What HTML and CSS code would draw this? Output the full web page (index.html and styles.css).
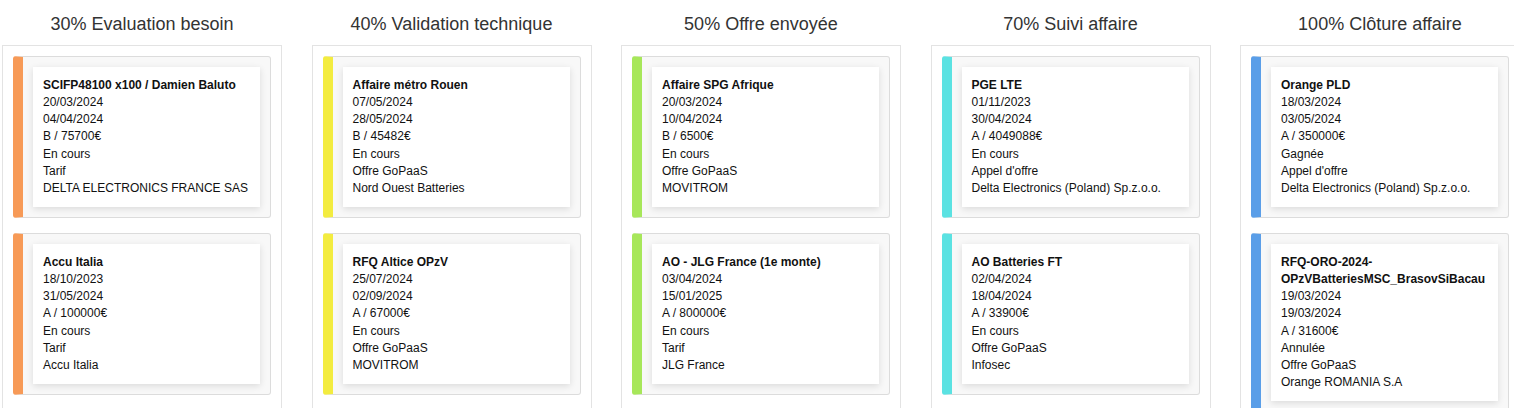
FILE: index.html
```html
<!DOCTYPE html>
<html lang="fr">
<head>
<meta charset="utf-8">
<title>Pipeline</title>
<link rel="stylesheet" href="styles.css">
</head>
<body>
<div class="board">
  <section class="stage">
    <h4 class="stage-title">30% Evaluation besoin</h4>
    <div class="stage-body">
      <div class="deal deal-orange"><div class="deal-inner">
        <div class="deal-name">SCIFP48100 x100 / Damien Baluto</div>
        <div>20/03/2024</div><div>04/04/2024</div><div>B / 75700€</div><div>En cours</div><div>Tarif</div><div>DELTA ELECTRONICS FRANCE SAS</div>
      </div></div>
      <div class="deal deal-orange"><div class="deal-inner">
        <div class="deal-name">Accu Italia</div>
        <div>18/10/2023</div><div>31/05/2024</div><div>A / 100000€</div><div>En cours</div><div>Tarif</div><div>Accu Italia</div>
      </div></div>
    </div>
  </section>
  <section class="stage">
    <h4 class="stage-title">40% Validation technique</h4>
    <div class="stage-body">
      <div class="deal deal-yellow"><div class="deal-inner">
        <div class="deal-name">Affaire métro Rouen</div>
        <div>07/05/2024</div><div>28/05/2024</div><div>B / 45482€</div><div>En cours</div><div>Offre GoPaaS</div><div>Nord Ouest Batteries</div>
      </div></div>
      <div class="deal deal-yellow"><div class="deal-inner">
        <div class="deal-name">RFQ Altice OPzV</div>
        <div>25/07/2024</div><div>02/09/2024</div><div>A / 67000€</div><div>En cours</div><div>Offre GoPaaS</div><div>MOVITROM</div>
      </div></div>
    </div>
  </section>
  <section class="stage">
    <h4 class="stage-title">50% Offre envoyée</h4>
    <div class="stage-body">
      <div class="deal deal-green"><div class="deal-inner">
        <div class="deal-name">Affaire SPG Afrique</div>
        <div>20/03/2024</div><div>10/04/2024</div><div>B / 6500€</div><div>En cours</div><div>Offre GoPaaS</div><div>MOVITROM</div>
      </div></div>
      <div class="deal deal-green"><div class="deal-inner">
        <div class="deal-name">AO - JLG France (1e monte)</div>
        <div>03/04/2024</div><div>15/01/2025</div><div>A / 800000€</div><div>En cours</div><div>Tarif</div><div>JLG France</div>
      </div></div>
    </div>
  </section>
  <section class="stage">
    <h4 class="stage-title">70% Suivi affaire</h4>
    <div class="stage-body">
      <div class="deal deal-cyan"><div class="deal-inner">
        <div class="deal-name">PGE LTE</div>
        <div>01/11/2023</div><div>30/04/2024</div><div>A / 4049088€</div><div>En cours</div><div>Appel d'offre</div><div>Delta Electronics (Poland) Sp.z.o.o.</div>
      </div></div>
      <div class="deal deal-cyan"><div class="deal-inner">
        <div class="deal-name">AO Batteries FT</div>
        <div>02/04/2024</div><div>18/04/2024</div><div>A / 33900€</div><div>En cours</div><div>Offre GoPaaS</div><div>Infosec</div>
      </div></div>
    </div>
  </section>
  <section class="stage">
    <h4 class="stage-title">100% Clôture affaire</h4>
    <div class="stage-body">
      <div class="deal deal-blue"><div class="deal-inner">
        <div class="deal-name">Orange PLD</div>
        <div>18/03/2024</div><div>03/05/2024</div><div>A / 350000€</div><div>Gagnée</div><div>Appel d'offre</div><div>Delta Electronics (Poland) Sp.z.o.o.</div>
      </div></div>
      <div class="deal deal-blue"><div class="deal-inner">
        <div class="deal-name">RFQ-ORO-2024-OPzVBatteriesMSC_BrasovSiBacau</div>
        <div>19/03/2024</div><div>19/03/2024</div><div>A / 31600€</div><div>Annulée</div><div>Offre GoPaaS</div><div>Orange ROMANIA S.A</div>
      </div></div>
    </div>
  </section>
</div>
</body>
</html>
```
FILE: styles.css
```css
html, body {
  margin: 0;
  padding: 0;
  background: #fff;
  overflow: hidden;
}
body {
  font-family: "Liberation Sans", Arial, sans-serif;
  font-size: 12px;
  line-height: 1.42857;
  color: #111;
}
.board {
  display: grid;
  grid-template-columns: repeat(5, 280px);
  column-gap: 29.5px;
  padding-left: 2px;
  width: max-content;
}
.stage {
  display: flex;
  flex-direction: column;
}
.stage-title {
  margin: 0 0 11px;
  padding-top: 14px;
  font-size: 18px;
  line-height: 20px;
  font-weight: normal;
  color: #333;
  text-align: center;
}
.stage-body {
  flex: 1;
  border: 1px solid #e3e3e3;
  padding: 10px 10px 0;
  min-height: 380px;
}
.deal {
  background: #f8f8f8;
  border: 1px solid #dcdcdc;
  border-left-width: 10px;
  border-radius: 3px;
  padding: 10px;
  margin-bottom: 15px;
}
.deal-orange { border-left-color: #f79a57; }
.deal-yellow { border-left-color: #f3ec40; }
.deal-green { border-left-color: #a7e75a; }
.deal-cyan { border-left-color: #5be2e2; }
.deal-blue { border-left-color: #5a9ee8; }
.deal-inner {
  background: #fff;
  padding: 10px;
  box-shadow: 0 2px 7px rgba(0, 0, 0, 0.12);
}
.deal-name {
  font-weight: bold;
}
```
